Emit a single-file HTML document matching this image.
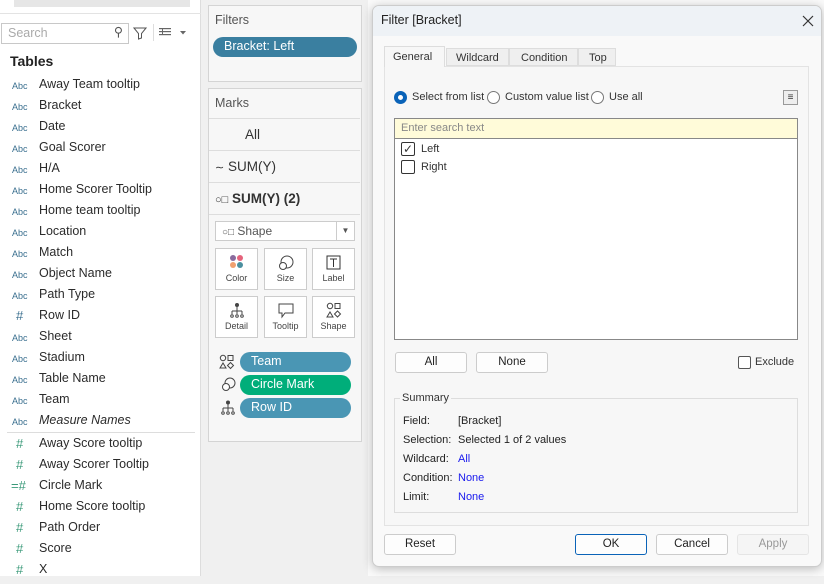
<!DOCTYPE html>
<html><head><style>
*{box-sizing:border-box;margin:0;padding:0}
body{width:824px;height:576px;position:relative;overflow:hidden;background:#f0f0f0;font-family:"Liberation Sans",sans-serif;font-size:12px;color:#333;line-height:1.2}
.a{position:absolute;white-space:nowrap}
.lrow{position:absolute;left:0;width:200px;height:21px;font-size:12.5px;color:#2b2b2b;white-space:nowrap}
.lrow .i{position:absolute;left:12px;top:3px;font-size:9px;color:#3a6f8f;width:22px}
.lrow .h{position:absolute;left:16px;top:-1px;font-size:13px;color:#3b9a7a}
.lrow .t{position:absolute;left:39px;top:-1px}
.card{position:absolute;background:#f7f7f7;border:1px solid #d4d4d4}
.mrow{position:absolute;left:0;width:151px;border-bottom:1px solid #ddd;font-size:13.5px;white-space:nowrap}
.mb{position:absolute;width:43px;height:42px;background:#fff;border:1px solid #ccc;font-size:9px;text-align:center;color:#444}
.pill{position:absolute;left:240px;width:111px;height:20px;border-radius:10px;color:#fff;font-size:12.5px;padding:2px 11px;background:#4a96b4}
.btn{position:absolute;height:21px;background:#fdfdfd;border:1px solid #ccc;border-radius:3px;text-align:center;font-size:11.5px;line-height:19px;color:#222}
.rad{position:absolute;width:13px;height:13px;border:1px solid #777;border-radius:50%;background:#fff}
.sm{position:absolute;left:403px;font-size:11px;color:#222}
.sv{position:absolute;left:458px;font-size:11px;color:#222}
</style></head><body>
<div class="a" style="left:0;top:0;width:201px;height:576px;background:#fff;border-right:1px solid #ddd"></div>
<div class="a" style="left:14px;top:-6px;width:176px;height:13px;background:#e6e6e6"></div>
<div class="a" style="left:0;top:13px;width:201px;height:1px;background:#e3e3e3"></div>
<div class="a" style="left:1px;top:23px;width:128px;height:21px;border:1px solid #c8c8c8;background:#fff;color:#aaa;font-size:12.5px;padding:2px 6px">Search<span style="position:absolute;right:5px;top:1px;color:#555">&#9906;</span></div>
<svg class="a" style="left:133px;top:26px" width="14" height="14"><path d="M1 2h12L8.5 7.5V12L5.5 13V7.5Z" fill="none" stroke="#555"/></svg>
<div class="a" style="left:153px;top:24px;width:1px;height:17px;background:#ddd"></div>
<svg class="a" style="left:159px;top:28px" width="28" height="10"><g fill="#666"><rect x="0" y="0" width="12" height="1.2"/><rect x="0" y="3" width="12" height="1.2"/><rect x="0" y="6" width="12" height="1.2"/><rect x="3" y="0" width="1" height="7"/></g><path d="M21 3h6l-3 3.5z" fill="#666"/></svg>
<div class="a" style="left:10px;top:53px;font-size:14px;font-weight:bold;color:#222">Tables</div>
<div id="list"></div>
<div class="a" style="left:7px;top:432px;width:188px;height:1px;background:#ddd"></div>
<div class="a" style="left:201px;top:0;width:167px;height:576px;background:#f0f0f0"></div>
<div class="a" style="left:368px;top:0;width:456px;height:576px;background:#fafafa"></div>
<div class="card" style="left:208px;top:5px;width:154px;height:77px"></div>
<div class="a" style="left:215px;top:13px;font-size:12.5px;color:#555">Filters</div>
<div class="a" style="left:213px;top:37px;width:144px;height:20px;border-radius:10px;background:#3a7fa0;color:#fff;font-size:12.5px;padding:2px 11px">Bracket: Left</div>
<div class="card" style="left:208px;top:88px;width:154px;height:354px"></div>
<div class="a" style="left:209px;top:89px;width:152px">
 <div class="mrow" style="top:0;height:30px;padding:7px 6px;font-size:12.5px;color:#555">Marks</div>
 <div class="mrow" style="top:30px;height:32px;padding:8px 36px">All</div>
 <div class="mrow" style="top:62px;height:32px;padding:8px 6px"><span style="font-size:11px">&#8764;</span> SUM(Y)</div>
 <div class="mrow" style="top:94px;height:32px;padding:8px 6px;font-weight:bold"><span style="font-weight:normal;font-size:11px">&#9675;&#9633;</span> SUM(Y) (2)</div>
</div>
<div class="a" style="left:215px;top:221px;width:140px;height:20px;background:#fff;border:1px solid #ccc;font-size:12px;color:#555;padding:2px 6px"><span style="font-size:10px">&#9675;&#9633;</span> Shape<span style="position:absolute;right:0;top:0;width:18px;height:18px;border-left:1px solid #ccc;text-align:center;font-size:8px;line-height:18px">&#9660;</span></div>
<div class="mb" style="left:215px;top:248px"><svg width="18" height="18" style="margin-top:5px"><circle cx="5" cy="4" r="3" fill="#8a6b9d"/><circle cx="12" cy="4" r="3" fill="#e5637b"/><circle cx="5" cy="11" r="3" fill="#f0a070"/><circle cx="12" cy="11" r="3" fill="#4b8f9f"/></svg><div style="margin-top:-2px">Color</div></div>
<div class="mb" style="left:264px;top:248px"><svg width="18" height="18" style="margin-top:5px"><circle cx="10" cy="8" r="6" fill="none" stroke="#444"/><circle cx="6" cy="12" r="3.5" fill="#fff" stroke="#444"/></svg><div style="margin-top:-2px">Size</div></div>
<div class="mb" style="left:312px;top:248px"><svg width="18" height="18" style="margin-top:5px"><rect x="2" y="2" width="13" height="13" fill="none" stroke="#333"/><path d="M5 5h7M8.5 5v8" stroke="#333"/></svg><div style="margin-top:-2px">Label</div></div>
<div class="mb" style="left:215px;top:296px"><svg width="18" height="18" style="margin-top:5px"><circle cx="9" cy="3" r="2" fill="#444"/><path d="M9 5v4M4 9h10M4 9v3M9 9v3M14 9v3" stroke="#444"/><circle cx="4" cy="14" r="1.3" fill="none" stroke="#444"/><circle cx="9" cy="14" r="1.3" fill="none" stroke="#444"/><circle cx="14" cy="14" r="1.3" fill="none" stroke="#444"/></svg><div style="margin-top:-2px">Detail</div></div>
<div class="mb" style="left:264px;top:296px"><svg width="18" height="18" style="margin-top:5px"><path d="M2 2h14v9H8l-3 4v-4H2z" fill="none" stroke="#444"/></svg><div style="margin-top:-2px">Tooltip</div></div>
<div class="mb" style="left:312px;top:296px"><svg width="18" height="18" style="margin-top:5px"><circle cx="5" cy="4" r="2.7" fill="none" stroke="#444"/><rect x="10" y="1.5" width="5" height="5" fill="none" stroke="#444"/><path d="M2 15l3-5 3 5z M12.5 9l3 3-3 3-3-3z" fill="none" stroke="#444"/></svg><div style="margin-top:-2px">Shape</div></div>
<svg class="a" style="left:219px;top:354px" width="16" height="16"><circle cx="4" cy="4" r="2.7" fill="none" stroke="#444"/><rect x="9" y="1.5" width="5" height="5" fill="none" stroke="#444"/><path d="M1 14l3-5 3 5z M11.5 8.5l3 3-3 3-3-3z" fill="none" stroke="#444"/></svg>
<svg class="a" style="left:220px;top:377px" width="16" height="16"><circle cx="10" cy="6" r="5" fill="none" stroke="#444"/><circle cx="6" cy="10" r="3.5" fill="#fff" stroke="#444"/></svg>
<svg class="a" style="left:220px;top:400px" width="16" height="16"><circle cx="8" cy="2.5" r="2" fill="#444"/><path d="M8 4v4M3 8h10M3 8v3M8 8v3M13 8v3" stroke="#444"/><circle cx="3" cy="13" r="1.3" fill="none" stroke="#444"/><circle cx="8" cy="13" r="1.3" fill="none" stroke="#444"/><circle cx="13" cy="13" r="1.3" fill="none" stroke="#444"/></svg>
<div class="pill" style="top:352px">Team</div>
<div class="pill" style="top:375px;background:#00ae7a">Circle Mark</div>
<div class="pill" style="top:398px">Row ID</div>
<div class="a" style="left:372px;top:5px;width:450px;height:562px;background:#f9f9f9;border:1px solid #ccc;border-radius:7px;box-shadow:0 2px 10px rgba(0,0,0,.25);overflow:hidden">
 <div class="a" style="left:0;top:0;width:450px;height:30px;background:#eef2f6"></div>
 <div class="a" style="left:8px;top:7px;font-size:12.5px;color:#222">Filter [Bracket]</div>
 <svg class="a" style="left:429px;top:9px" width="12" height="12"><path d="M1 1l10 10M11 1L1 11" stroke="#333" stroke-width="1.2"/></svg>
</div>
<div class="a" style="left:384px;top:66px;width:425px;height:460px;background:#f7f7f7;border:1px solid #e3e3e3"></div>
<div class="a" style="left:384px;top:46px;width:61px;height:21px;background:#f7f7f7;border:1px solid #ddd;border-bottom:none;font-size:11px;padding:4px 8px">General</div>
<div class="a" style="left:446px;top:48px;width:63px;height:18px;background:#efefef;border:1px solid #ddd;font-size:11px;padding:3px 9px">Wildcard</div>
<div class="a" style="left:509px;top:48px;width:69px;height:18px;background:#efefef;border:1px solid #ddd;font-size:11px;padding:3px 11px">Condition</div>
<div class="a" style="left:578px;top:48px;width:38px;height:18px;background:#efefef;border:1px solid #ddd;font-size:11px;padding:3px 10px">Top</div>
<div class="rad" style="left:394px;top:91px;border:4px solid #0a63b8"></div>
<div class="a" style="left:412px;top:91px;font-size:11px">Select from list</div>
<div class="rad" style="left:487px;top:91px"></div>
<div class="a" style="left:505px;top:91px;font-size:11px">Custom value list</div>
<div class="rad" style="left:591px;top:91px"></div>
<div class="a" style="left:609px;top:91px;font-size:11px">Use all</div>
<div class="a" style="left:783px;top:90px;width:15px;height:15px;border:1px solid #999;background:#eee;font-size:10px;text-align:center;line-height:13px">&#8801;</div>
<div class="a" style="left:394px;top:118px;width:404px;height:222px;background:#fff;border:1px solid #888"></div>
<div class="a" style="left:395px;top:119px;width:402px;height:20px;background:#fffbd9;border-bottom:1px solid #888;color:#888;font-size:11px;padding:3px 6px">Enter search text</div>
<div class="a" style="left:401px;top:142px;width:14px;height:14px;border:1px solid #333;border-radius:2px;font-size:12px;line-height:12px;text-align:center">&#10003;</div>
<div class="a" style="left:421px;top:143px;font-size:11px">Left</div>
<div class="a" style="left:401px;top:160px;width:14px;height:14px;border:1px solid #333;border-radius:2px"></div>
<div class="a" style="left:421px;top:161px;font-size:11px">Right</div>
<div class="btn" style="left:395px;top:352px;width:72px">All</div>
<div class="btn" style="left:476px;top:352px;width:72px">None</div>
<div class="a" style="left:738px;top:356px;width:13px;height:13px;border:1px solid #555;border-radius:2px;background:#fff"></div>
<div class="a" style="left:755px;top:356px;font-size:11px">Exclude</div>
<div class="a" style="left:394px;top:398px;width:404px;height:115px;border:1px solid #ddd"></div>
<div class="a" style="left:400px;top:392px;font-size:11px;background:#f7f7f7;padding:0 2px">Summary</div>
<div class="sm" style="top:415px">Field:</div><div class="sv" style="top:415px">[Bracket]</div>
<div class="sm" style="top:434px">Selection:</div><div class="sv" style="top:434px">Selected 1 of 2 values</div>
<div class="sm" style="top:453px">Wildcard:</div><div class="sv" style="top:453px;color:#1a1aee">All</div>
<div class="sm" style="top:472px">Condition:</div><div class="sv" style="top:472px;color:#1a1aee">None</div>
<div class="sm" style="top:491px">Limit:</div><div class="sv" style="top:491px;color:#1a1aee">None</div>
<div class="btn" style="left:384px;top:534px;width:72px">Reset</div>
<div class="btn" style="left:575px;top:534px;width:72px;border:1px solid #0a63b8">OK</div>
<div class="btn" style="left:656px;top:534px;width:72px">Cancel</div>
<div class="btn" style="left:737px;top:534px;width:72px;color:#999;border-color:#e5e5e5;background:#f5f5f5">Apply</div>
<script>
var items=[["A","Away Team tooltip"],["A","Bracket"],["A","Date"],["A","Goal Scorer"],["A","H/A"],["A","Home Scorer Tooltip"],["A","Home team tooltip"],["A","Location"],["A","Match"],["A","Object Name"],["A","Path Type"],["H","Row ID"],["A","Sheet"],["A","Stadium"],["A","Table Name"],["A","Team"],["A","Measure Names"],["H","Away Score tooltip"],["H","Away Scorer Tooltip"],["C","Circle Mark"],["H","Home Score tooltip"],["H","Path Order"],["H","Score"],["H","X"]];
var h="";items.forEach(function(it,i){var y=78+i*21+(i>16?2:0);var ic=it[0]=="A"?'<span class="i">Abc</span>':(it[0]=="C"?'<span class="h" style="left:11px">=#</span>':'<span class="h">#</span>');var st=it[1]=="Measure Names"?' style="font-style:italic"':'';if(i==11)ic='<span class="h" style="color:#3a6f8f">#</span>';h+='<div class="lrow" style="top:'+y+'px">'+ic+'<span class="t"'+st+'>'+it[1]+'</span></div>';});
document.getElementById("list").innerHTML=h;
</script>
</body></html>
